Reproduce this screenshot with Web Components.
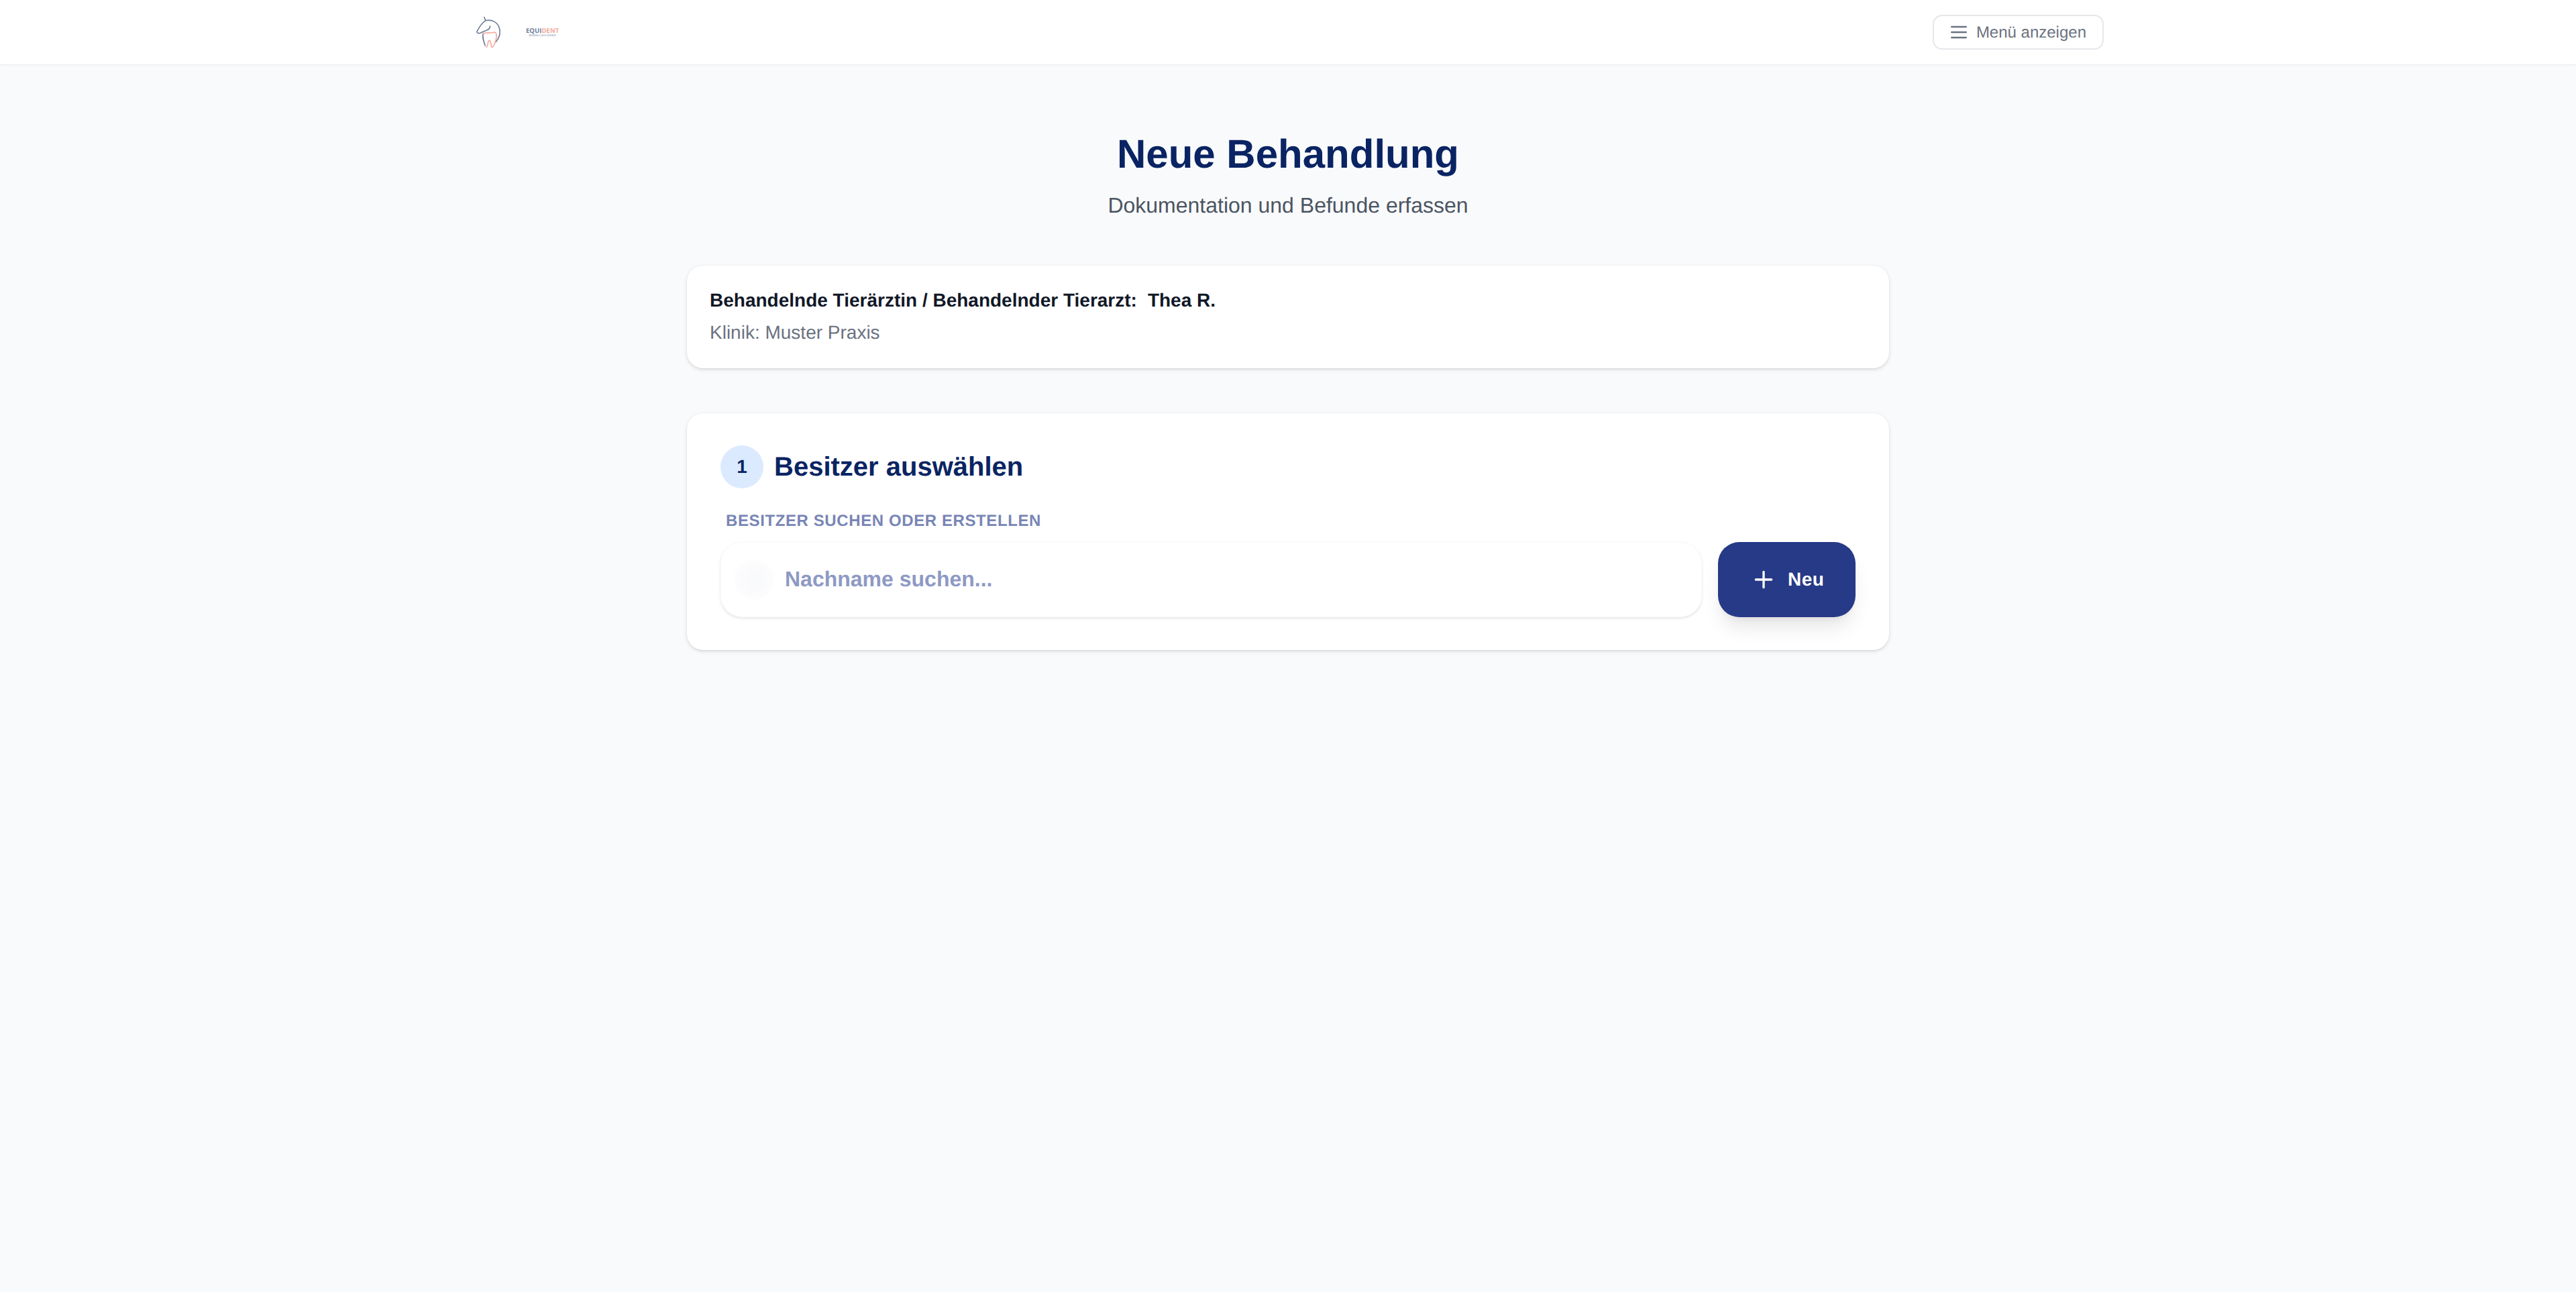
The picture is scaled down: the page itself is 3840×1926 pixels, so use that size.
<!DOCTYPE html>
<html lang="de">
<head>
<meta charset="utf-8">
<title>Neue Behandlung</title>
<style>
  html, body { margin: 0; padding: 0; }
  body { background: #f9fafb; min-height: 1926px; font-family: "Liberation Sans", Arial, sans-serif; text-rendering: geometricPrecision; }
</style>
</head>
<body>
<app-header>
  <equi-logo></equi-logo>
  <menu-button>Menü anzeigen</menu-button>
</app-header>
<main-column>
  <page-title heading="Neue Behandlung">Dokumentation und Befunde erfassen</page-title>
  <info-card vet="Thea R." clinic="Klinik: Muster Praxis">Behandelnde Tierärztin / Behandelnder Tierarzt:</info-card>
  <step-card step="1" heading="Besitzer auswählen">
    <owner-search label="BESITZER SUCHEN ODER ERSTELLEN" placeholder="Nachname suchen...">
      <new-button>Neu</new-button>
    </owner-search>
  </step-card>
</main-column>
<script>
function def(name, html, init) {
  customElements.define(name, class extends HTMLElement {
    constructor() {
      super();
      const root = this.attachShadow({ mode: 'open' });
      const t = document.createElement('template');
      t.innerHTML = html;
      root.appendChild(t.content.cloneNode(true));
    }
    connectedCallback() { if (init) init(this, this.shadowRoot); }
  });
}
def('app-header', `
  <style>
    :host { display: block; background: #fff; border-bottom: 1px solid #eceef2; height: 96px; box-shadow: 0 1px 2px rgba(0,0,0,.03); }
    .in { width: 2432px; height: 96px; margin: 0 auto; display: flex; align-items: center; justify-content: space-between; }
  </style>
  <div class="in"><slot></slot></div>`);
def('equi-logo', `
  <style>
    :host { display: flex; align-items: center; gap: 35px; padding-left: 3px; height: 96px; }
    svg { display: block; width: 42px; height: 50px; margin-top: -1px; }
    .t { display: flex; flex-direction: column; align-items: center; font-family: "Open Sans", sans-serif; }
    .m { font-size: 9.6px; line-height: 9px; font-weight: 700; color: #6f7f9b; white-space: nowrap; }
    .m b { color: #f2a99c; font-weight: 700; }
    .s { font-size: 4.6px; line-height: 6px; color: #6f7f9b; white-space: nowrap; }
  </style>
  <svg viewBox="80 70 125 150" fill="none" stroke-linecap="round" stroke-linejoin="round">
    <path d="M124 78 L130 93 C112 105 100 125 91 143 C92 150 100 152 108 148 C118 143 126 140 134 137 C143 133 151 128 150 118 M130 93 C158 86 184 100 192 128 C198 150 190 172 177 188 M120 150 C113 162 120 180 128 205" stroke="#6f7f9b" stroke-width="5"/>
    <path d="M120 152 C135 142 150 152 165 146 C180 142 182 162 176 180 C171 196 166 212 160 212 C152 212 156 182 147 182 C138 182 142 212 133 212" stroke="#f2a99c" stroke-width="5"/>
  </svg>
  <div class="t"><div class="m">EQUI<b>DENT</b></div><div class="s">Mobile Care GmbH</div></div>`);
def('menu-button', `
  <style>
    :host { display: inline-flex; align-items: center; box-sizing: border-box; height: 52px; padding: 0 24px 0 21px; gap: 10px; background: #fff; border: 2px solid #e5e7eb; border-radius: 14px; color: #6b7280; font-size: 24px; font-family: "Liberation Sans", Arial, sans-serif; white-space: nowrap; }
    svg { width: 32px; height: 32px; display: block; }
    span { margin-top: 2px; }
  </style>
  <svg viewBox="0 0 24 24" fill="none" stroke="#6b7280" stroke-width="2" stroke-linecap="round"><path d="M4 6h16M4 12h16M4 18h16"/></svg>
  <span><slot></slot></span>`);
def('main-column', `
  <style>
    :host { display: block; width: 1792px; margin: 0 auto; padding-top: 97px; }
  </style>
  <slot></slot>`);
def('page-title', `
  <style>
    :host { display: block; text-align: center; margin-bottom: 66px; }
    h1 { margin: 0 0 16px; font-size: 60px; line-height: 72px; font-weight: 700; color: #0a2463; }
    p { margin: 0; font-size: 32px; line-height: 48px; color: #4b5563; }
  </style>
  <h1></h1><p><slot></slot></p>`, (el, r) => { r.querySelector('h1').textContent = el.getAttribute('heading'); });
def('info-card', `
  <style>
    :host { display: block; box-sizing: border-box; height: 153px; padding: 29px 32px; background: #fff; border: 2px solid #fff; border-radius: 24px; box-shadow: 0 2px 6px rgba(0,0,0,.1), 0 2px 4px -2px rgba(0,0,0,.12), 0 0 0 1px rgba(0,0,0,.012); margin-bottom: 67px; }
    .a { font-size: 28px; line-height: 42px; font-weight: 700; color: #111827; white-space: nowrap; }
    .v { margin-left: 16px; }
    .c { font-size: 28px; line-height: 42px; margin-top: 6px; color: #6b7280; }
  </style>
  <div class="a"><slot></slot><span class="v"></span></div><div class="c"></div>`, (el, r) => {
    r.querySelector('.v').textContent = el.getAttribute('vet');
    r.querySelector('.c').textContent = el.getAttribute('clinic');
  });
def('step-card', `
  <style>
    :host { display: block; box-sizing: border-box; height: 353px; padding: 46px 48px 48px; background: #fff; border: 2px solid #fff; border-radius: 24px; box-shadow: 0 2px 6px rgba(0,0,0,.1), 0 2px 4px -2px rgba(0,0,0,.12), 0 0 0 1px rgba(0,0,0,.012); }
    .h { display: flex; align-items: center; gap: 16px; height: 64px; margin-bottom: 31px; }
    .n { width: 64px; height: 64px; border-radius: 50%; background: #dbeafe; display: flex; align-items: center; justify-content: center; font-size: 28px; font-weight: 700; color: #0a2463; }
    h2 { margin: 0; font-size: 40px; line-height: 60px; font-weight: 700; color: #0a2463; }
  </style>
  <div class="h"><div class="n"></div><h2></h2></div><slot></slot>`, (el, r) => {
    r.querySelector('.n').textContent = el.getAttribute('step');
    r.querySelector('h2').textContent = el.getAttribute('heading');
  });
def('owner-search', `
  <style>
    :host { display: block; }
    .l { font-size: 24px; line-height: 36px; font-weight: 700; letter-spacing: .6px; color: #7885b5; padding-left: 8px; margin-bottom: 13px; white-space: nowrap; }
    .r { display: flex; gap: 24px; }
    .i { flex: 1; height: 112px; box-sizing: border-box; display: flex; align-items: center; gap: 16px; padding-left: 19px; background: #fff; border: 1px solid #fafafb; border-radius: 32px; box-shadow: 0 2px 4px rgba(0,0,0,.1); font-size: 32px; font-weight: 700; color: #8e99c4; }
    .b { width: 60px; height: 60px; border-radius: 50%; background: radial-gradient(circle, #f8f9fb 0%, #fbfbfd 45%, #ffffff 100%); }
    .p { margin-top: -2px; }
  </style>
  <div class="l"></div>
  <div class="r"><div class="i"><div class="b"></div><span class="p"></span></div><slot></slot></div>`, (el, r) => {
    r.querySelector('.l').textContent = el.getAttribute('label');
    r.querySelector('.p').textContent = el.getAttribute('placeholder');
  });
def('new-button', `
  <style>
    :host { display: inline-flex; align-items: center; box-sizing: border-box; height: 112px; width: 205px; padding-left: 48px; gap: 16px; background: #273a87; border-radius: 32px; box-shadow: 0 20px 30px -6px rgba(0,0,0,.1), 0 8px 12px -6px rgba(0,0,0,.06); color: #fff; font-size: 28px; font-weight: 700; letter-spacing: .5px; }
    svg { width: 40px; height: 40px; display: block; flex: none; }
  </style>
  <svg viewBox="0 0 24 24" fill="none" stroke="#fff" stroke-width="2" stroke-linecap="round"><path d="M5 12h14M12 5v14"/></svg>
  <slot></slot>`);
</script>
</body>
</html>
